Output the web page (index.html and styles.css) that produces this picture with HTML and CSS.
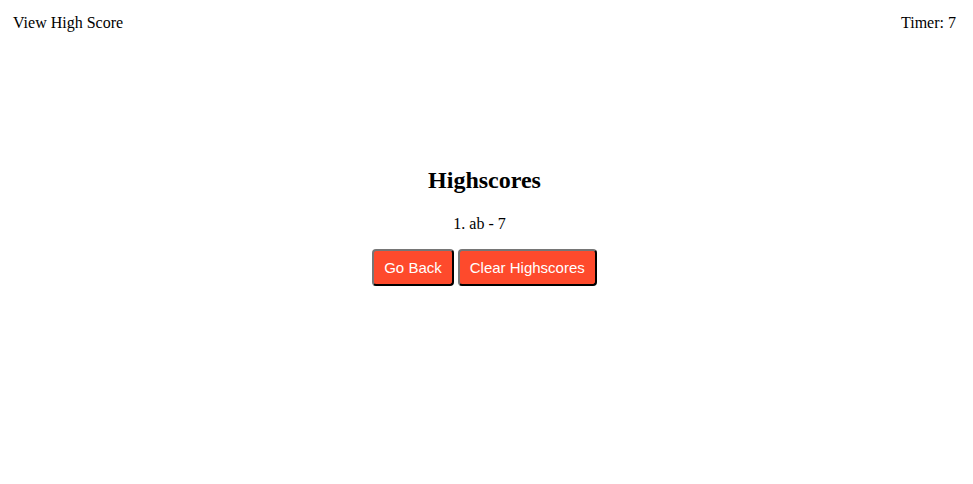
FILE: index.html
```html
<!DOCTYPE html>
<html lang="en">
<head>
<meta charset="utf-8">
<title>Highscores</title>
<link rel="stylesheet" href="styles.css">
</head>
<body>
<header class="topbar">
  <span class="view-link">View High Score</span>
  <span class="timer">Timer: 7</span>
</header>
<main class="scores">
  <h2 class="scores-title">Highscores</h2>
  <p class="score-item">1. ab - 7</p>
  <div class="actions">
    <button class="btn">Go Back</button>
    <button class="btn">Clear Highscores</button>
  </div>
</main>
</body>
</html>
```
FILE: styles.css
```css
body {
  margin: 8px;
  font-family: "Liberation Serif", "Times New Roman", serif;
  font-size: 16px;
  color: #000;
  background: #fff;
}
.topbar {
  display: flex;
  justify-content: space-between;
  padding: 6px 9px 6px 5px;
  line-height: 18px;
}
.scores {
  margin-top: 128px;
  padding-right: 4px;
  display: flex;
  flex-direction: column;
  align-items: center;
}
.scores-title {
  margin: 0;
  font-size: 24px;
  font-weight: bold;
  line-height: 28px;
}
.score-item {
  margin: 21px 0 0;
  padding-right: 10px;
  line-height: 18px;
}
.actions {
  margin-top: 16px;
  display: flex;
  gap: 4px;
}
.btn {
  font-family: "Liberation Sans", Arial, Helvetica, sans-serif;
  font-size: 15px;
  line-height: 17px;
  color: #fff;
  background: #fe4a2c;
  border: 2px outset #767676;
  border-color: #767676 #2b2b2b #2b2b2b #767676;
  border-radius: 4px;
  padding: 8px 10px;
}
```
